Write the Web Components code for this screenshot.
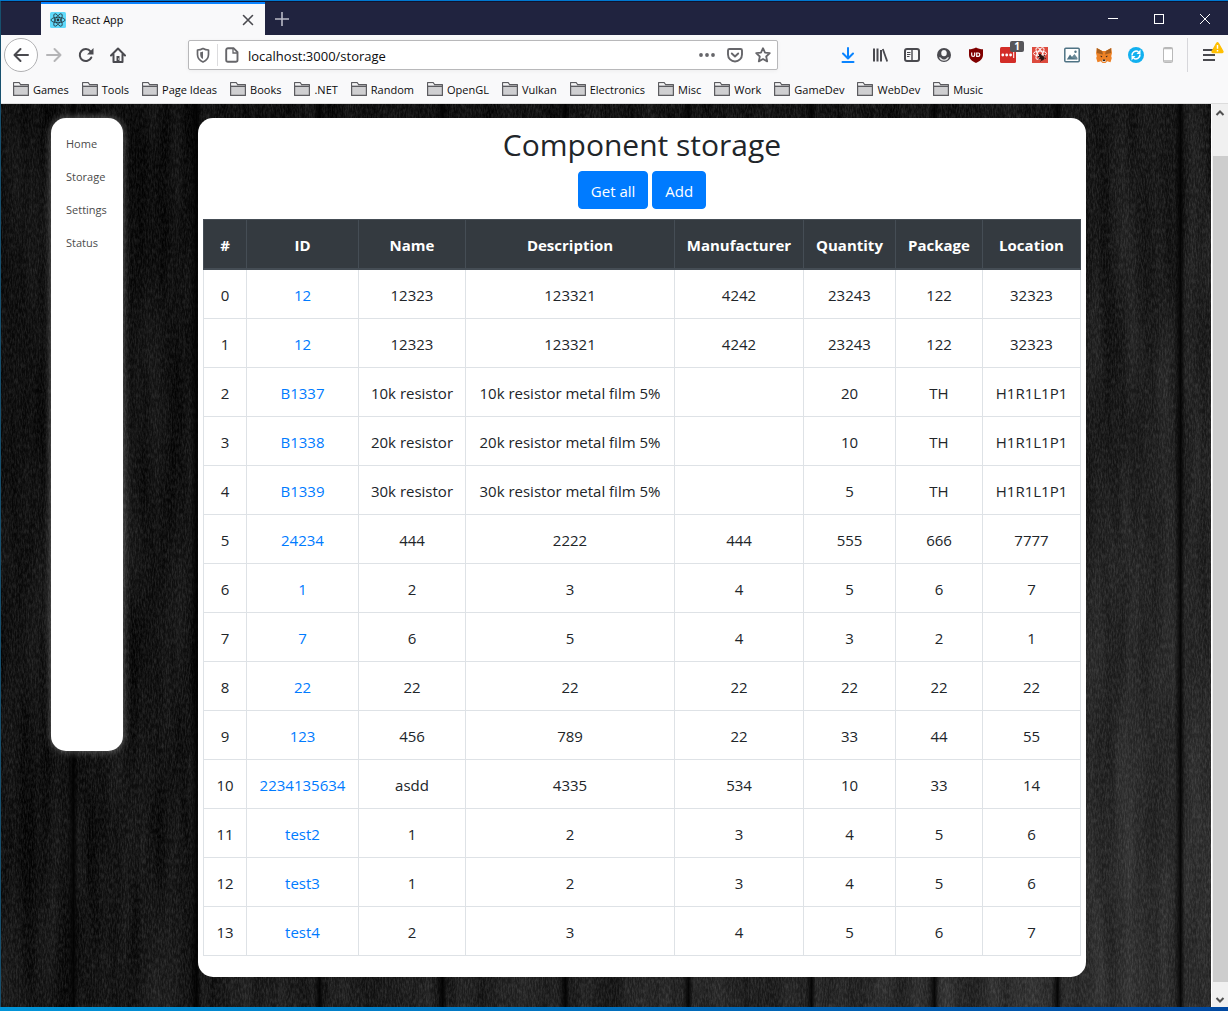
<!DOCTYPE html>
<html lang="en">
<head>
<meta charset="utf-8">
<title>React App</title>
<style>
html, body { margin: 0; height: 100%; }
body { font-family: "Open Sans", "Noto Sans", sans-serif; color: #212529; }
</style>
</head>
<body>
<browser-window>
  <tab-strip slot="chrome"></tab-strip>
  <nav-toolbar slot="chrome"></nav-toolbar>
  <bookmark-bar slot="chrome"></bookmark-bar>
  <side-menu slot="page"></side-menu>
  <storage-panel slot="page" heading="Component storage">
    <app-button>Get all</app-button>
    <app-button>Add</app-button>
    <component-table slot="table"></component-table>
  </storage-panel>
</browser-window>

<script>
const ICONS = {
  react: '<rect width="16" height="16" rx="1.5" fill="#61dafb"/><g fill="none" stroke="#23343c" stroke-width=".8"><ellipse cx="8" cy="8" rx="7" ry="2.7"/><ellipse cx="8" cy="8" rx="7" ry="2.7" transform="rotate(60 8 8)"/><ellipse cx="8" cy="8" rx="7" ry="2.7" transform="rotate(120 8 8)"/></g><circle cx="8" cy="8" r="1.4" fill="#23343c"/>',
  close: '<path d="M3.5 3.5l9 9M12.5 3.5l-9 9" fill="none" stroke="#4a4a4f" stroke-width="1.6" stroke-linecap="round"/>',
  plus: '<path d="M8 1v14M1 8h14" stroke="#b9bac6" stroke-width="1.6" fill="none"/>',
  min: '<path d="M3 7.500h10" stroke="#fff" fill="none"/>',
  max: '<rect x="3.500" y="3.500" width="9" height="9" stroke="#fff" fill="none"/>',
  quit: '<path d="M3 3l10 10M13 3L3 13" stroke="#fff" fill="none"/>',
  back: '<path d="M15 8H2M7.500 2L1.500 8l6 6" stroke="#4a4a4f" stroke-width="2" fill="none" stroke-linecap="round" stroke-linejoin="round"/>',
  forward: '<path d="M1 8h13M8.500 2l6 6-6 6" stroke="#b5b5b7" stroke-width="2" fill="none" stroke-linecap="round" stroke-linejoin="round"/>',
  reload: '<path d="M13.300 10.500A6 6 0 1 1 12.500 4.300" stroke="#4a4a4f" stroke-width="2" fill="none" stroke-linecap="round"/><path d="M15.500 1v6.500H9z" fill="#4a4a4f"/>',
  home: '<path d="M1 8.500l7-7 7 7M3.500 7.500V15h9V7.500" stroke="#4a4a4f" stroke-width="2" fill="none" stroke-linecap="round" stroke-linejoin="round"/><path d="M6.500 9h3v6h-3z" fill="#4a4a4f"/><path d="M8 11.500h1v1H8z" fill="#fff"/>',
  shield: '<path d="M8 1.500C6.200 2.600 4.500 3 2.500 3v4.500c0 3.700 2 6 5.500 7.500 3.500-1.500 5.500-3.800 5.500-7.500V3C11.500 3 9.800 2.600 8 1.500z" stroke="#66666a" stroke-width="1.700" fill="none" stroke-linejoin="round"/><path d="M8 4.500v7.600C6 11 5.200 9.500 5.200 7.500V5.300C6.300 5.200 7.200 4.900 8 4.500z" fill="#66666a"/>',
  page: '<path d="M4 1.200h5.500l4 4V13a1.800 1.800 0 0 1-1.800 1.800H4A1.800 1.800 0 0 1 2.200 13V3A1.800 1.800 0 0 1 4 1.200z" stroke="#66666a" stroke-width="1.900" fill="none"/><path d="M9 1.500V6h4.500" stroke="#66666a" stroke-width="1.300" fill="none"/>',
  dots: '<g fill="#66666a"><circle cx="2" cy="8" r="1.900"/><circle cx="8" cy="8" r="1.900"/><circle cx="14" cy="8" r="1.900"/></g>',
  pocket: '<path d="M2.500 2h11A1.500 1.500 0 0 1 15 3.500V7.500a7 7 0 0 1-14 0V3.500A1.500 1.500 0 0 1 2.500 2z" stroke="#66666a" stroke-width="1.900" fill="none"/><path d="M4.800 6.500L8 9.500l3.200-3" stroke="#66666a" stroke-width="1.900" fill="none" stroke-linecap="round" stroke-linejoin="round"/>',
  star: '<path d="M8 1.200l2 4.500 4.800.5-3.600 3.300 1 4.900L8 12l-4.200 2.400 1-4.900L1.200 6.200 6 5.700z" stroke="#66666a" stroke-width="1.800" fill="none" stroke-linejoin="round"/>',
  download: '<path d="M8 1v10M3 6.500l5 5 5-5M2.500 15h11" stroke="#0a84ff" stroke-width="2" fill="none" stroke-linecap="round" stroke-linejoin="round"/>',
  library: '<path d="M2 1.500v13M5.500 1.500v13M9 3v11.500" stroke="#4a4a4f" stroke-width="2" fill="none"/><path d="M10.800 2l4.400 12.500" stroke="#4a4a4f" stroke-width="1.800" fill="none"/>',
  sidebar: '<rect x="1" y="2" width="14" height="12" rx="2" stroke="#4a4a4f" stroke-width="2" fill="none"/><path d="M8 2v12" stroke="#4a4a4f" stroke-width="1.400"/><path d="M3 5.500h3.500M3 7.500h3.500M3 9.500h2.500" stroke="#4a4a4f"/>',
  account: '<circle cx="8" cy="8" r="7" fill="#4a4a4f"/><path d="M5.300 5a2.800 2.800 0 0 1 5.400 0v1.600a2.700 2.700 0 0 1-5.400 0z" fill="#f9f9fa"/><path d="M3 10.300c1.200-.3 1.800.2 2.600 1.100 1.200 1.300 3.600 1.300 4.800 0 .8-.9 1.400-1.400 2.600-1.100a5.300 5.300 0 0 1-10 0z" fill="#f9f9fa" opacity=".9"/>',
  ublock: '<path d="M8 .5C6 1.700 3.500 2.300 1 2.300V8c0 3.700 3 6.200 7 8 4-1.800 7-4.300 7-8V2.300C12.500 2.300 10 1.700 8 .5z" fill="#800000"/><path d="M3.700 5.500v2.400a1.500 1.500 0 0 0 3 0V5.500" stroke="#fff" stroke-width="1.200" fill="none"/><path d="M8.700 6h1.400a1.700 1.700 0 0 1 0 3.400H8.700z" stroke="#fff" stroke-width="1.200" fill="none"/>',
  lastpass: '<rect width="16" height="16" rx="1.500" fill="#d32d27"/><g fill="#fff"><circle cx="2.800" cy="8" r="1.400"/><circle cx="6.700" cy="8" r="1.400"/><circle cx="10.600" cy="8" r="1.400"/><path d="M13.200 5h1v6h-1z"/></g>',
  reactbug: '<rect width="16" height="16" fill="#dd4b3e"/><g fill="none" stroke="#fff" stroke-width="1"><ellipse cx="8" cy="6.500" rx="6.500" ry="2.400"/><ellipse cx="8" cy="6.500" rx="6.500" ry="2.400" transform="rotate(60 8 6.500)"/><ellipse cx="8" cy="6.500" rx="6.500" ry="2.400" transform="rotate(120 8 6.500)"/></g><ellipse cx="9.800" cy="10.700" rx="2" ry="2.900" transform="rotate(-35 9.800 10.700)" fill="#2a1512"/><circle cx="8" cy="7.900" r="1.200" fill="#2a1512"/><path d="M6 9.500l3 .3M6.500 12l2.500-1M8.500 14.500l1.500-2M13 8.500l-2.500 1M13.800 11.500l-2-.8" stroke="#2a1512" fill="none"/>',
  picture: '<rect x=".8" y="1.300" width="14.400" height="13.400" rx="1" fill="#fff" stroke="#4f7384" stroke-width="1.500"/><path d="M2.800 12.500L6 7.500l2.200 2.700L9.500 8.500l3.700 4z" fill="#4f7384"/><path d="M7.500 10.500L10.500 7l3 4v1.500z" fill="#6b8997"/><circle cx="11.500" cy="4.700" r="1.200" fill="#4f7384"/>',
  fox: '<path d="M.8 1l5.400 3h3.600L15.200 1 16 6l-.8 3.200.6 1.800-1.300 4.200-3.300-.9L9.500 16h-3L4.800 14.300l-3.300.9L.2 11l.6-1.800L0 6z" fill="#ee8226"/><path d="M.8 1l5.400 3L7 7.500 1 6zM15.200 1L9.800 4 9 7.500 15 6z" fill="#a9601f"/><path d="M4 8.800l2.300.3-.6 1.500zM12 8.800l-2.300.3.6 1.500z" fill="#3b2b23"/><path d="M6 12.800h4l-.4 2.200H6.400z" fill="#e3d2c2"/><path d="M6.800 12.500h2.400v1.500H6.800z" fill="#2b211c"/>',
  sync: '<circle cx="8" cy="8" r="8" fill="#12b0ef"/><path d="M4 8.500A4.200 4.200 0 0 1 10.500 4.800M12 7.500A4.200 4.200 0 0 1 5.500 11.200" stroke="#fff" stroke-width="1.600" fill="none"/><path d="M12.500 2.500v4.500H8.500zM3.500 13.500V9h4z" fill="#fff"/>',
  phone: '<rect x="3.500" y=".5" width="9" height="15" rx="1" fill="#fff" stroke="#b9b9b9"/><path d="M3.500 1.500h9M3.500 14h9" stroke="#b9b9b9" stroke-width="1.500"/>',
  menu: '<path d="M2 3h12M2 8h12M2 13h12" stroke="#4a4a4f" stroke-width="2" fill="none"/>',
  warn: '<path d="M7.100 2.500a1 1 0 0 1 1.800 0l5.800 10.300a1 1 0 0 1-.9 1.500H2.200a1 1 0 0 1-.9-1.500z" fill="#ffbf00" stroke="#ffbf00" stroke-width="1.500" stroke-linejoin="round"/><path d="M8 5v4.500M8 11v1.800" stroke="#fff" stroke-width="1.800"/>',
  folder: '<path d="M.6 14.400V1.600h5.600l1.300 2h7.900v10.800z" fill="#cfcfd1" stroke="#5c5c60" stroke-width="1.200" stroke-linejoin="round"/><path d="M1.200 2.200h4.700l1.300 2H1.200z" fill="#f4f4f5"/><path d="M.6 5.400h14.800" stroke="#5c5c60" stroke-width="1.200"/>',
  up: '<path d="M4.500 10L8 6.500l3.500 3.500" stroke="#505050" stroke-width="2" fill="none"/>',
  down: '<path d="M4.500 8L8 11.500 11.500 8" stroke="#505050" stroke-width="2" fill="none"/>'
};

class BaseElement extends HTMLElement {
  connectedCallback() {
    if (this.shadowRoot) return;
    this.attachShadow({ mode: 'open' }).innerHTML =
      '<style>:host,*{box-sizing:border-box}' + this.css() + '</style>' + this.html();
  }
}

customElements.define('ui-icon', class extends BaseElement {
  css() { return ':host{display:block;flex:none;width:var(--size,16px);height:var(--size,16px)}svg{display:block;width:100%;height:100%}'; }
  html() { return `<svg viewBox="0 0 16 16" aria-hidden="true">${ICONS[this.getAttribute('name')]}</svg>`; }
});

customElements.define('tab-strip', class extends BaseElement {
  css() { return `
    :host{display:flex;height:34px;background:#20233f;border-top:1px solid #101330;font-size:11px;color:#0c0c0d}
    .tab{display:flex;align-items:center;gap:6px;width:224px;margin-left:40px;padding:0 9px;background:#f9f9fa;border-top:2px solid #0a84ff}
    .title{flex:1}
    button{display:grid;place-items:center;padding:0;border:0;background:none}
    .new{width:34px}
    .controls{display:flex;margin-left:auto}
    .controls button{width:46px}`; }
  html() { return `
    <div class="tab"><ui-icon name="react"></ui-icon><span class="title">React App</span>
      <button aria-label="Close tab"><ui-icon name="close"></ui-icon></button></div>
    <button class="new" aria-label="New tab"><ui-icon name="plus"></ui-icon></button>
    <div class="controls">
      <button aria-label="Minimize"><ui-icon name="min"></ui-icon></button>
      <button aria-label="Maximize"><ui-icon name="max"></ui-icon></button>
      <button aria-label="Close"><ui-icon name="quit"></ui-icon></button>
    </div>`; }
});

customElements.define('nav-toolbar', class extends BaseElement {
  css() { return `
    :host{display:flex;align-items:center;height:40px;padding:0 3px;background:#f9f9fa}
    button{display:grid;place-items:center;flex:none;width:32px;height:32px;padding:0;border:0;background:none;position:relative}
    .back{width:34px;height:34px;border:1px solid #b1b1b3;border-radius:50%;background:#fff}
    .space{flex:1}
    .url{display:flex;align-items:center;flex:0 1 590px;height:30px;border:1px solid #b8b8ba;border-radius:2px;background:#fff;box-shadow:0 1px 4px #0000000d}
    .url button{width:28px;height:28px}
    .url .rule{width:1px;height:22px;background:#dcdcde}
    input{flex:1;min-width:0;height:28px;padding:2px 0 0 2px;border:0;background:none;font:13px "Open Sans","Noto Sans",sans-serif;color:#0c0c0d}
    .badge{position:absolute;top:2px;right:0;width:14px;height:11px;border-radius:2px;background:#56565a;color:#fff;font:bold 10px/11px "Open Sans",sans-serif;text-align:center}
    .sep{width:1px;height:34px;margin:0 5px 0 3px;background:#d7d7db}
    .warn{position:absolute;top:2px;right:1px;--size:13px}`; }
  html() {
    const tools = ['download', 'library', 'sidebar', 'account', 'ublock', 'lastpass', 'reactbug', 'picture', 'fox', 'sync', 'phone'];
    return `
    <button class="back" aria-label="Back"><ui-icon name="back"></ui-icon></button>
    <button aria-label="Forward"><ui-icon name="forward"></ui-icon></button>
    <button aria-label="Reload"><ui-icon name="reload"></ui-icon></button>
    <button aria-label="Home"><ui-icon name="home"></ui-icon></button>
    <span class="space"></span>
    <div class="url">
      <button aria-label="Tracking protection"><ui-icon name="shield"></ui-icon></button>
      <span class="rule"></span>
      <button aria-label="Site information"><ui-icon name="page"></ui-icon></button>
      <input type="text" aria-label="Address" value="localhost:3000/storage">
      <button aria-label="Page actions"><ui-icon name="dots"></ui-icon></button>
      <button aria-label="Save to Pocket"><ui-icon name="pocket"></ui-icon></button>
      <button aria-label="Bookmark"><ui-icon name="star"></ui-icon></button>
    </div>
    <span class="space"></span>
    ${tools.map(t => `<button aria-label="${t}"><ui-icon name="${t}"></ui-icon>${t === 'lastpass' ? '<span class="badge">1</span>' : ''}</button>`).join('')}
    <span class="sep"></span>
    <button aria-label="Menu"><ui-icon name="menu"></ui-icon><ui-icon class="warn" name="warn"></ui-icon></button>`;
  }
});

customElements.define('bookmark-bar', class extends BaseElement {
  css() { return `
    :host{display:flex;align-items:center;gap:13px;height:29px;padding:0 12px;background:#f9f9fa;border-bottom:1px solid #dcdcdc;font-size:11px}
    a{display:flex;align-items:center;gap:4px;color:#0c0c0d;text-decoration:none;white-space:nowrap}`; }
  html() {
    return ['Games', 'Tools', 'Page Ideas', 'Books', '.NET', 'Random', 'OpenGL', 'Vulkan', 'Electronics', 'Misc', 'Work', 'GameDev', 'WebDev', 'Music']
      .map(n => `<a href="#"><ui-icon name="folder"></ui-icon><span>${n}</span></a>`).join('');
  }
});

customElements.define('wood-backdrop', class extends BaseElement {
  css() { return ':host{display:block;overflow:hidden;background:#141414;contain:size}svg{display:block;width:100%;height:100%}'; }
  html() {
    const planks = Array.from({ length: 20 }, (_, i) => 72 + i * 123);
    return `<svg aria-hidden="true">
      <defs>
        <filter id="grain" x="0" y="0" width="100%" height="100%" color-interpolation-filters="sRGB">
          <feTurbulence type="fractalNoise" baseFrequency="0.05 0.005" numOctaves="4" seed="8"/>
          <feColorMatrix values=".32 0 0 0 -.07  .32 0 0 0 -.07  .32 0 0 0 -.07  0 0 0 0 1"/>
        </filter>
        <filter id="speck" x="0" y="0" width="100%" height="100%" color-interpolation-filters="sRGB">
          <feTurbulence type="fractalNoise" baseFrequency="0.7 0.2" numOctaves="3" seed="3"/>
          <feColorMatrix values=".5 0 0 0 -.17  .5 0 0 0 -.17  .5 0 0 0 -.17  0 0 0 0 1"/>
        </filter>
        <linearGradient id="light" x1="0" y1="0" x2="1" y2=".8">
          <stop offset="0" stop-color="#000" stop-opacity=".3"/><stop offset=".45" stop-color="#111" stop-opacity=".15"/>
          <stop offset="1" stop-color="#888" stop-opacity=".22"/>
        </linearGradient>
        <linearGradient id="seam"><stop offset="0" stop-opacity="0"/><stop offset=".6" stop-opacity=".85"/><stop offset="1" stop-opacity="0"/></linearGradient>
      </defs>
      <rect width="100%" height="100%" filter="url(#grain)"/>
      <rect width="100%" height="100%" filter="url(#speck)" opacity=".5"/>
      <rect width="100%" height="100%" fill="url(#light)"/>
      ${planks.map(x => `<rect x="${x - 6}" width="11" height="100%" fill="url(#seam)"/>`).join('')}
    </svg>`;
  }
});

customElements.define('scroll-track', class extends BaseElement {
  css() { return `
    :host{display:flex;flex-direction:column;align-items:center;width:17px;background:#f0f0f0;border-left:1px solid #fff}
    ui-icon{margin:1px 0}
    .thumb{flex:1;width:15px;margin:34px 0 7px;background:#cdcdcd}`; }
  html() { return '<ui-icon name="up"></ui-icon><div class="thumb"></div><ui-icon name="down"></ui-icon>'; }
});

customElements.define('browser-window', class extends BaseElement {
  css() { return `
    :host{display:flex;flex-direction:column;min-height:100%;border-top:1px solid #0078d0;background:linear-gradient(90deg,#0295d8,#0048a0)}
    .window{flex:1;display:flex;flex-direction:column;margin-bottom:4px;border-left:1px solid #17506e}
    .view{flex:1;display:flex}
    .page{flex:1;display:grid}
    .page>*{grid-area:1/1}
    .content{display:flex;align-items:flex-start;gap:75px;padding:14px 125px 30px 50px;z-index:1}`; }
  html() { return `<div class="window"><slot name="chrome"></slot>
    <div class="view"><div class="page"><wood-backdrop></wood-backdrop><div class="content"><slot name="page"></slot></div></div><scroll-track></scroll-track></div></div>`; }
});

customElements.define('side-menu', class extends BaseElement {
  css() { return `
    :host{display:block;flex:none;width:72px;height:calc((100vh - 107px) * .7);padding:15px 0 0 15px;border-radius:15px;background:#fff;box-shadow:0 0 8px #ffffff66}
    nav{display:flex;flex-direction:column;gap:11px}
    a{font-size:11px;line-height:22px;color:#4b4b4b;text-decoration:none}`; }
  html() { return `<nav>${['Home', 'Storage', 'Settings', 'Status'].map(n => `<a href="#">${n}</a>`).join('')}</nav>`; }
});

customElements.define('app-button', class extends BaseElement {
  css() { return `
    :host{display:block}
    button{padding:7px 12px 5px;border:1px solid #007bff;border-radius:4px;background:#007bff;color:#fff;font:15px/24px "Open Sans","Noto Sans",sans-serif}`; }
  html() { return '<button type="button"><slot></slot></button>'; }
});

customElements.define('storage-panel', class extends BaseElement {
  css() { return `
    :host{display:block;flex:1;min-width:0;padding:8px 5px 21px;border-radius:15px;background:#fff}
    h2{margin:0 0 7px;font-size:30px;line-height:38px;font-weight:400;text-align:center}
    .actions{display:flex;justify-content:center;gap:4px;margin-bottom:10px}`; }
  html() { return `<h2>${this.getAttribute('heading')}</h2><div class="actions"><slot></slot></div><slot name="table"></slot>`; }
});

customElements.define('component-table', class extends BaseElement {
  css() { return `
    :host{display:block}
    table{width:100%;table-layout:fixed;border-collapse:collapse;font-size:15px;line-height:24px;text-align:center}
    th,td{padding:13px 0 11px;height:49px;border:1px solid #dee2e6;white-space:nowrap}
    th{background:#343a40;color:#fff;border-color:#454d55;border-bottom-width:2px;font-weight:700}
    a{color:#007bff;text-decoration:none}`; }
  html() {
    const heads = [['#', 43], ['ID', 112], ['Name', 107], ['Description', 209], ['Manufacturer', 129], ['Quantity', 92], ['Package', 87], ['Location', 98]];
    const rows = [
      ['12', '12323', '123321', '4242', '23243', '122', '32323'],
      ['12', '12323', '123321', '4242', '23243', '122', '32323'],
      ['B1337', '10k resistor', '10k resistor metal film 5%', '', '20', 'TH', 'H1R1L1P1'],
      ['B1338', '20k resistor', '20k resistor metal film 5%', '', '10', 'TH', 'H1R1L1P1'],
      ['B1339', '30k resistor', '30k resistor metal film 5%', '', '5', 'TH', 'H1R1L1P1'],
      ['24234', '444', '2222', '444', '555', '666', '7777'],
      ['1', '2', '3', '4', '5', '6', '7'],
      ['7', '6', '5', '4', '3', '2', '1'],
      ['22', '22', '22', '22', '22', '22', '22'],
      ['123', '456', '789', '22', '33', '44', '55'],
      ['2234135634', 'asdd', '4335', '534', '10', '33', '14'],
      ['test2', '1', '2', '3', '4', '5', '6'],
      ['test3', '1', '2', '3', '4', '5', '6'],
      ['test4', '2', '3', '4', '5', '6', '7']
    ];
    return `<table><colgroup>${heads.map(h => `<col style="width:${h[1]}px">`).join('')}</colgroup>
      <thead><tr>${heads.map(h => `<th scope="col">${h[0]}</th>`).join('')}</tr></thead>
      <tbody>${rows.map((r, i) => `<tr><td>${i}</td><td><a href="#">${r[0]}</a></td>${r.slice(1).map(c => `<td>${c}</td>`).join('')}</tr>`).join('')}</tbody></table>`;
  }
});
</script>
</body>
</html>
